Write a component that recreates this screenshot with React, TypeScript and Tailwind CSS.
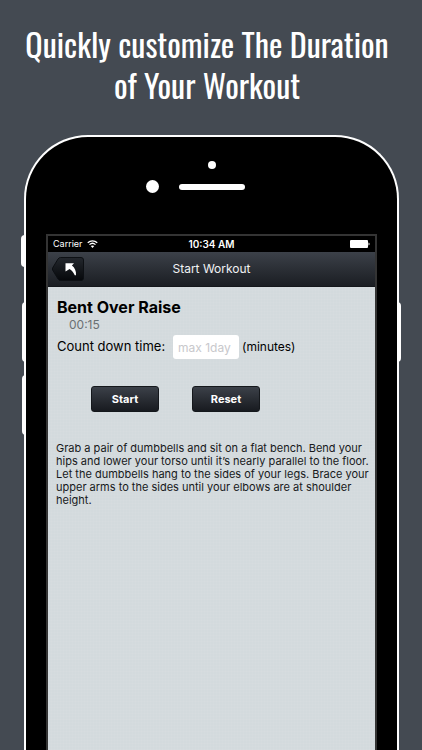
import { useState } from "react"

const sideButtons = [
  "-left-[5px] top-[98px] h-8 w-[4px] rounded-l-sm",
  "-left-[4px] top-[165px] h-[60px] w-[4px] rounded-l-sm",
  "-left-[4px] top-[238px] h-[60px] w-[4px] rounded-l-sm",
  "-right-[4px] top-[165px] h-[60px] w-[4px] rounded-r-sm",
]

function StatusBar() {
  return (
    <div className="grid h-4 grid-cols-3 items-center bg-black px-[5px] text-[10px] leading-4 text-white">
      <div className="flex items-center gap-1">
        <span className="text-[9px]">Carrier</span>
        <svg className="h-2 w-[11px]" viewBox="0 0 22 16" fill="none" stroke="#fff" strokeWidth="2.6">
          <path d="M1.5 5.5C7 .4 15 .4 20.500 5.500" />
          <path d="M5 9.300C8.500 6 13.500 6 17 9.300" />
          <path d="M11 16 7.500 12.200C9.500 10.400 12.500 10.400 14.500 12.200Z" fill="#fff" stroke="none" />
        </svg>
      </div>
      <span className="text-center font-semibold">10:34 AM</span>
      <svg className="h-[8px] w-5 justify-self-end" viewBox="0 0 20 8" fill="#fff">
        <rect width="18" height="8" rx="1" />
        <path d="M18.500 2.500c1.400.3 1.400 2.700 0 3z" />
      </svg>
    </div>
  )
}

function NavBar() {
  return (
    <header className="grid h-[35px] grid-cols-[40px_1fr_40px] items-center border-b border-[#14171b] bg-linear-to-b from-[#3c4149] to-[#1b1e23] px-1">
      <button type="button" aria-label="Back" className="h-6 w-8">
        <svg className="h-6 w-8" viewBox="0 0 32 24">
          <defs>
            <linearGradient id="back" x1="0" y1="0" x2="0" y2="1">
              <stop offset="0" stopColor="#23272d" />
              <stop offset="1" stopColor="#06080b" />
            </linearGradient>
          </defs>
          <path
            d="M8.500.5H29a2.500 2.500 0 0 1 2.500 2.500v18a2.500 2.500 0 0 1-2.500 2.500H8.500Q7 23.500 6 22L.7 13.200Q0 12 .7 10.800L6 2Q7 .5 8.500.5Z"
            fill="url(#back)"
            stroke="#0d1014"
          />
          <path
            d="M13.500 6.300H22L19.900 8.400C22.800 10.600 24.400 14 24 18.200H22.800C21.700 15.700 20 13.700 17.600 12L13.500 14.400Z"
            fill="#fff"
          />
        </svg>
      </button>
      <h2 className="text-center text-[12px] leading-5 text-[#f1f2f3]">Start Workout</h2>
    </header>
  )
}

function ActionButton({ label, onClick }: { label: string; onClick: () => void }) {
  return (
    <button
      type="button"
      onClick={onClick}
      className="h-[26px] w-[68px] rounded-[3px] border border-[#15181c] bg-linear-to-b from-[#3c4149] to-[#181b20] text-[11px] font-bold text-white"
    >
      {label}
    </button>
  )
}

function Workout() {
  const [minutes, setMinutes] = useState("")
  const [running, setRunning] = useState(false)

  const handleReset = () => {
    setRunning(false)
    setMinutes("")
  }

  return (
    <main className="flex-1 bg-[#d3dadd] bg-[repeating-linear-gradient(0deg,#ffffff0a_0px_1px,transparent_1px_3px),repeating-linear-gradient(90deg,#ffffff0a_0px_1px,transparent_1px_3px)] pt-[10px] pl-2 text-black">
      <h3 className="pl-px text-base leading-5 font-bold">Bent Over Raise</h3>
      <p className="pl-[13px] text-[12px] leading-4 text-[#6b7073]" aria-live={running ? "polite" : "off"}>
        00:15
      </p>
      <div className="flex items-center pt-[2px] pl-px text-[12px]">
        <label htmlFor="minutes" className="w-[116px] text-[13px]">
          Count down time:
        </label>
        <input
          id="minutes"
          type="text"
          value={minutes}
          onChange={(e) => setMinutes(e.target.value)}
          placeholder="max 1day"
          className="h-6 w-[66px] rounded-[3px] bg-white px-[5px] placeholder:text-[#c8c8cc]"
        />
        <span className="pl-[3px]">(minutes)</span>
      </div>
      <div className="flex gap-[33px] pt-[27px] pl-[35px]">
        <ActionButton label="Start" onClick={() => setRunning(true)} />
        <ActionButton label="Reset" onClick={handleReset} />
      </div>
      <p className="pt-[30px] text-[11px] leading-[13px] text-[#17191b]">
        Grab a pair of dumbbells and sit on a flat bench. Bend your hips and lower your torso until it’s nearly
        parallel to the floor. Let the dumbbells hang to the sides of your legs. Brace your upper arms to the sides
        until your elbows are at shoulder height.
      </p>
    </main>
  )
}

export default function App() {
  return (
    <div className="flex min-h-screen flex-col overflow-hidden bg-[#444a52] font-[Inter,'Liberation_Sans',sans-serif]">
      <h1 className="pt-[23px] pr-6 pl-4 text-center font-[Oswald,'Roboto_Condensed','Liberation_Sans_Narrow',sans-serif] text-[32px] leading-[41px] text-white">
        Quickly customize The Duration
        <br />
        of Your Workout
      </h1>
      <div className="relative mt-[30px] mr-[23px] ml-6 flex flex-1 flex-col rounded-t-[64px] border-2 border-b-0 border-white bg-black px-5">
        {sideButtons.map((position) => (
          <span key={position} className={`absolute bg-white ${position}`} />
        ))}
        <div className="flex flex-col items-center pt-6">
          <span className="size-2 rounded-full bg-white" />
          <div className="mt-[11px] mb-[41px] grid w-full grid-cols-[1fr_66px_1fr] items-center">
            <span className="mr-5 size-[13px] justify-self-end rounded-full bg-white" />
            <span className="h-[6px] rounded-full bg-white" />
          </div>
        </div>
        <div className="flex flex-1 flex-col border-2 border-b-0 border-[#343434]">
          <StatusBar />
          <NavBar />
          <Workout />
        </div>
      </div>
    </div>
  )
}
